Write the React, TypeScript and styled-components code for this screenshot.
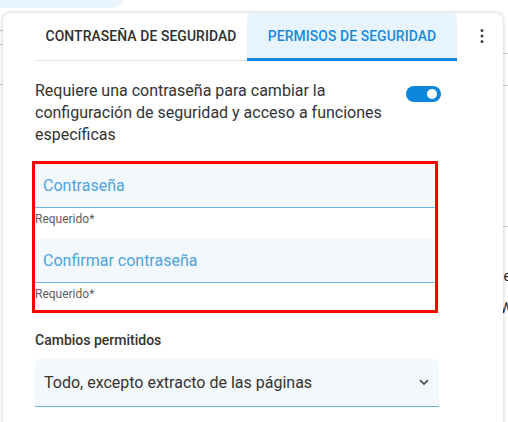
import React from "react";
import styled, { createGlobalStyle } from "styled-components";

const GlobalStyle = createGlobalStyle`
  html, body {
    margin: 0;
    padding: 0;
    background: #ffffff;
    font-family: Roboto, "Liberation Sans", Arial, sans-serif;
  }
  * {
    box-sizing: border-box;
  }
`;

const Page = styled.div`
  position: relative;
  width: 508px;
  height: 422px;
  overflow: hidden;
  background: #ffffff;
  padding: 13px 5px 0 3px;
`;

/* bits of the page that sits under the dialog */
const BackPill = styled.div`
  position: absolute;
  top: -20px;
  left: -10px;
  width: 135px;
  height: 28px;
  border-radius: 14px;
  background: #e8f4fd;
`;

const BackLine = styled.div<{ top: number; left: number; width: number }>`
  position: absolute;
  top: ${({ top }) => top}px;
  left: ${({ left }) => left}px;
  width: ${({ width }) => width}px;
  height: 1px;
  background: #c9c9c9;
`;

const BackGlyph = styled.span<{ top: number; left: number }>`
  position: absolute;
  top: ${({ top }) => top}px;
  left: ${({ left }) => left}px;
  font-size: 14px;
  color: #222;
`;

const Card = styled.div`
  position: relative;
  z-index: 1;
  width: 500px;
  height: 420px;
  background: #ffffff;
  border-radius: 8px 8px 0 0;
  box-shadow: 0 0 4px rgba(0, 0, 0, 0.22);
  padding: 0 0 0 32px;
  display: flex;
  flex-direction: column;
`;

const TabBar = styled.div`
  display: flex;
  align-items: stretch;
  height: 48px;
`;

const Tabs = styled.div`
  display: flex;
  border-bottom: 1px solid #e3e3e3;
`;

const Tab = styled.div<{ active?: boolean; width: number }>`
  width: ${({ width }) => width}px;
  display: flex;
  align-items: center;
  justify-content: center;
  font-size: 13.9px;
  font-weight: 500;
  letter-spacing: 0.1px;
  color: ${({ active }) => (active ? "#1789dc" : "#2e2e2e")};
  background: ${({ active }) => (active ? "#e8f4fd" : "transparent")};
  border-radius: 5px 5px 0 0;
  border-bottom: 3px solid ${({ active }) => (active ? "#0c86dd" : "transparent")};
  margin-bottom: -1px;
`;

const MenuButton = styled.div`
  flex: 1;
  display: flex;
  align-items: center;
  justify-content: center;
  padding: 0 0 2px 4px;
  color: #444;
`;

const Body = styled.div`
  width: 406px;
  display: flex;
  flex-direction: column;
`;

const OptionRow = styled.div`
  display: flex;
  justify-content: space-between;
  align-items: flex-start;
  margin-top: 19px;
`;

const OptionText = styled.p`
  margin: 0;
  width: 360px;
  font-size: 16px;
  line-height: 22px;
  color: #333333;
`;

const Switch = styled.div<{ on?: boolean }>`
  width: 35px;
  height: 16px;
  margin-top: 6px;
  border-radius: 8px;
  background: ${({ on }) => (on ? "#0c86dd" : "#bdbdbd")};
  display: flex;
  align-items: center;
  justify-content: ${({ on }) => (on ? "flex-end" : "flex-start")};
  padding: 0 4px;
`;

const Knob = styled.span`
  width: 10px;
  height: 10px;
  border-radius: 50%;
  background: #ffffff;
`;

const Highlight = styled.div`
  margin: 15px 0 0 -3px;
  width: 406px;
  border: 3px solid #ff0000;
  display: flex;
  flex-direction: column;
`;

const Field = styled.div`
  height: 44px;
  background: #f3f8fd;
  border-bottom: 1px solid #6cb4e4;
  display: flex;
  align-items: center;
  padding: 0 8px;
  font-size: 16px;
  color: #4ea2dd;
`;

const Hint = styled.div`
  height: 31px;
  padding: 4px 0 0 0;
  font-size: 12px;
  line-height: 14px;
  color: #5e5e5e;

  &:last-child {
    height: 27px;
  }
`;

const SectionLabel = styled.div`
  margin-top: 19px;
  font-size: 14px;
  font-weight: 500;
  color: #333333;
`;

const Select = styled.div`
  margin-top: 11px;
  width: 404px;
  height: 48px;
  background: #f3f8fd;
  border-radius: 4px 4px 0 0;
  border-bottom: 1px solid #6cb4e4;
  display: flex;
  align-items: center;
  justify-content: space-between;
  padding: 0 10px 0 9px;
  font-size: 16px;
  color: #333333;
`;

const Chevron = () => (
  <svg width="10" height="7" viewBox="0 0 10 7">
    <path d="M1 1.2 L5 5 L9 1.2" fill="none" stroke="#555" strokeWidth="1.8" />
  </svg>
);

const Kebab = () => (
  <svg width="4" height="14" viewBox="0 0 4 14">
    <circle cx="2" cy="1.6" r="1.5" fill="#444" />
    <circle cx="2" cy="7" r="1.5" fill="#444" />
    <circle cx="2" cy="12.4" r="1.5" fill="#444" />
  </svg>
);

export default function App() {
  return (
    <>
      <GlobalStyle />
      <Page>
        <BackPill />
        <BackLine top={30} left={0} width={3} />
        <BackLine top={44} left={0} width={3} />
        <BackLine top={84} left={0} width={3} />
        <BackLine top={53} left={500} width={8} />
        <BackLine top={85} left={500} width={8} />
        <BackLine top={226} left={500} width={8} />
        <BackGlyph top={268} left={500}>le</BackGlyph>
        <BackGlyph top={300} left={500}>W</BackGlyph>

        <Card>
          <TabBar>
            <Tabs>
              <Tab width={212}>CONTRASEÑA DE SEGURIDAD</Tab>
              <Tab width={210} active>
                PERMISOS DE SEGURIDAD
              </Tab>
            </Tabs>
            <MenuButton>
              <Kebab />
            </MenuButton>
          </TabBar>

          <Body>
            <OptionRow>
              <OptionText>
                Requiere una contraseña para cambiar la configuración de
                seguridad y acceso a funciones específicas
              </OptionText>
              <Switch on>
                <Knob />
              </Switch>
            </OptionRow>

            <Highlight>
              <Field>Contraseña</Field>
              <Hint>Requerido*</Hint>
              <Field>Confirmar contraseña</Field>
              <Hint>Requerido*</Hint>
            </Highlight>

            <SectionLabel>Cambios permitidos</SectionLabel>
            <Select>
              <span>Todo, excepto extracto de las páginas</span>
              <Chevron />
            </Select>
          </Body>
        </Card>
      </Page>
    </>
  );
}
